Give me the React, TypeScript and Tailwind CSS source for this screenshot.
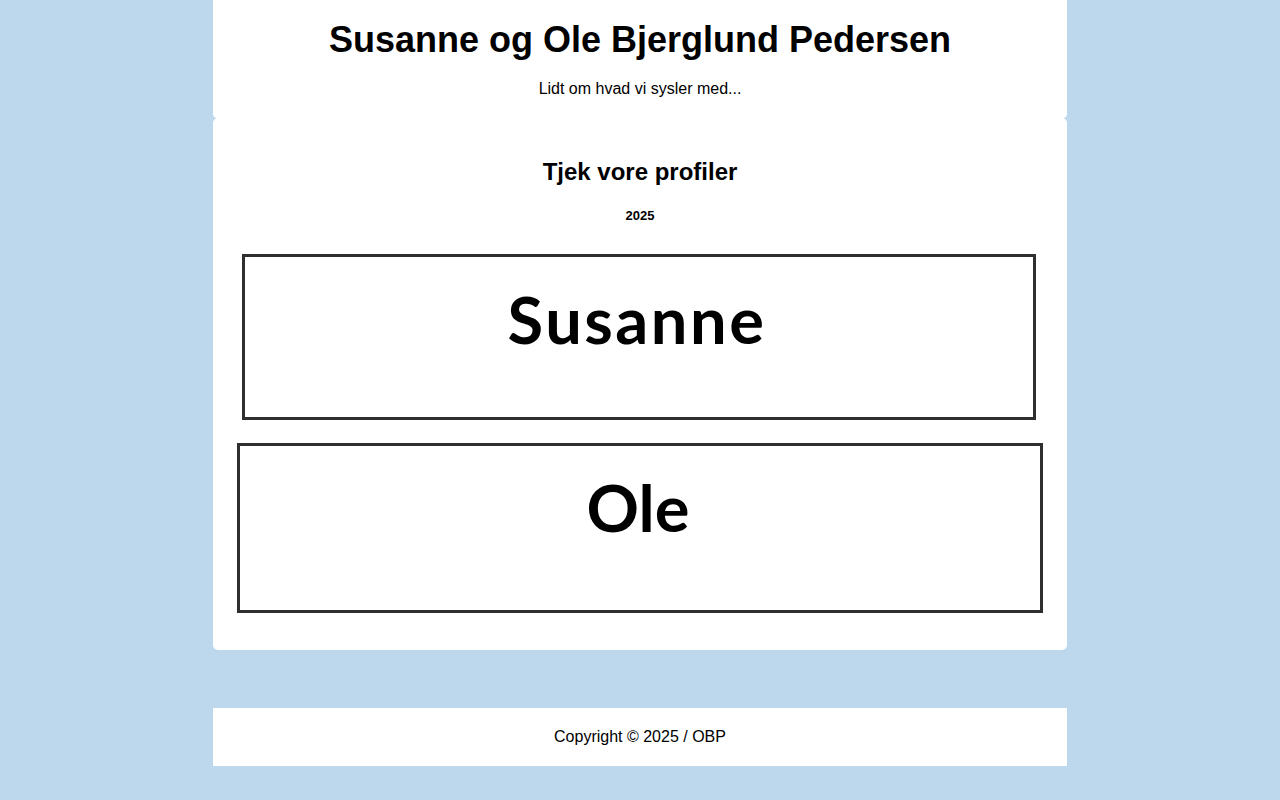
import React from 'react';

const NameCard: React.FC<{ name: string; className: string; textClass: string; nameClass?: string }> = ({ name, className, textClass, nameClass = '' }) => (
    <div className={`bg-white ${className}`}>
        <div className={`h-full border-[3px] border-[#2f2f2f] flex justify-center ${textClass}`}>
            <span className={`font-['Lato',sans-serif] font-bold text-[65px] leading-none text-black ${nameClass}`}>{name}</span>
        </div>
    </div>
);

const App: React.FC = () => {
    return (
        <div className="min-h-screen bg-[#bdd7ed] font-['Liberation_Sans',Arial,sans-serif] text-black">
            <div className="w-[854px] mx-auto">
                {/* Header */}
                <header className="bg-white rounded-b-[4px] text-center pt-[18px] pb-[17px]">
                    <h1 className="text-[36px] leading-[44px] font-bold">Susanne og Ole Bjerglund Pedersen</h1>
                    <p className="mt-[15px] text-[16px] leading-[24px]">Lidt om hvad vi sysler med...</p>
                </header>

                {/* Main */}
                <main className="bg-white rounded-[5px] text-center pt-[38px] pb-[34px] px-[24px]">
                    <h2 className="text-[24px] leading-[32px] font-bold">Tjek vore profiler</h2>
                    <p className="mt-[20px] text-[13px] leading-[16px] font-bold">2025</p>
                    <div className="mt-[24px] flex flex-col">
                        <NameCard name="Susanne" className="h-[178px] pt-[6px] pb-[6px] pl-[5px] pr-[7px]" textClass="pt-[30px] pr-[4px]" nameClass="tracking-[2.5px]" />
                        <NameCard name="Ole" className="mt-[14px] h-[176px] pt-[3px] pb-[3px] px-0" textClass="pt-[29px] pr-[4px]" />
                    </div>
                </main>

                <div className="h-[58px]" />

                {/* Footer */}
                <footer className="bg-white h-[58px] flex items-center justify-center text-[16px]">
                    Copyright © 2025 / OBP
                </footer>
            </div>
        </div>
    );
};

export default App;
